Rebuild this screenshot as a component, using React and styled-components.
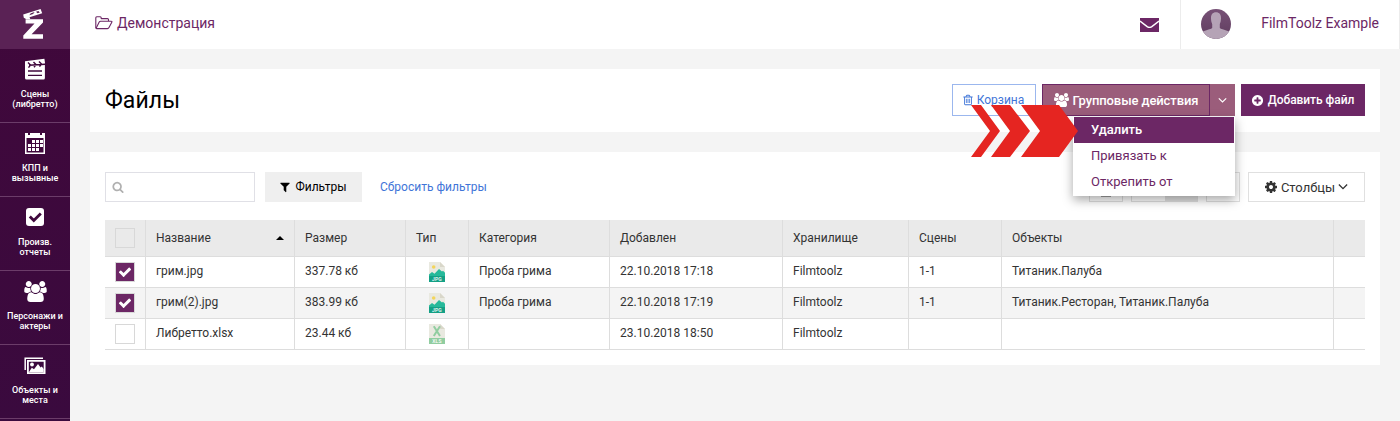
import React from "react";
import styled, { createGlobalStyle } from "styled-components";

const GlobalStyle = createGlobalStyle`
  * {
    box-sizing: border-box;
  }
  body {
    margin: 0;
    background: #f4f4f4;
    font-family: Roboto, "Liberation Sans", sans-serif;
    font-size: 13px;
    color: #333;
  }
  button {
    font-family: inherit;
    margin: 0;
  }
  svg {
    display: block;
    flex: none;
  }
`;

const paths = {
  users:
    "M593 896q-162 5-265 128h-134q-82 0-138-40.5t-56-118.5q0-353 124-353 6 0 43.5 21t97.5 42.5 119 21.5q67 0 133-23-5 37-5 66 0 139 81 256zm1071 637q0 120-73 189.5t-194 69.5h-874q-121 0-194-69.5t-73-189.5q0-53 3.5-103.5t14-109 26.5-108.5 43-97.5 62-81 85.5-53.5 111.5-20q10 0 43 21.5t73 48 107 48 135 21.5 135-21.5 107-48 73-48 43-21.5q61 0 111.5 20t85.5 53.5 62 81 43 97.5 26.5 108.5 14 109 3.5 103.5zm-1024-1277q0 106-75 181t-181 75-181-75-75-181 75-181 181-75 181 75 75 181zm704 384q0 159-112.5 271.5t-271.5 112.5-271.5-112.5-112.5-271.5 112.5-271.5 271.5-112.5 271.5 112.5 112.5 271.5zm576 225q0 78-56 118.5t-138 40.5h-134q-103-123-265-128 81-117 81-256 0-29-5-66 66 23 133 23 59 0 119-21.5t97.5-42.5 43.5-21q124 0 124 353zm-128-609q0 106-75 181t-181 75-181-75-75-181 75-181 181-75 181 75 75 181z",
  trash:
    "M704 736v576q0 14-9 23t-23 9h-64q-14 0-23-9t-9-23v-576q0-14 9-23t23-9h64q14 0 23 9t9 23zm256 0v576q0 14-9 23t-23 9h-64q-14 0-23-9t-9-23v-576q0-14 9-23t23-9h64q14 0 23 9t9 23zm256 0v576q0 14-9 23t-23 9h-64q-14 0-23-9t-9-23v-576q0-14 9-23t23-9h64q14 0 23 9t9 23zm128 724v-948h-896v948q0 22 7 40.5t14.5 27 10.5 8.5h832q3 0 10.5-8.5t14.5-27 7-40.5zm-672-1076h448l-48-117q-7-9-17-11h-317q-10 2-17 11zm928 32v64q0 14-9 23t-23 9h-96v948q0 83-47 143.5t-113 60.5h-832q-66 0-113-58.5t-47-141.5v-952h-96q-14 0-23-9t-9-23v-64q0-14 9-23t23-9h309l70-167q15-37 54-63t79-26h320q40 0 79 26t54 63l70 167h309q14 0 23 9t9 23z",
  search:
    "M1216 832q0-185-131.5-316.5t-316.5-131.5-316.5 131.5-131.5 316.5 131.5 316.5 316.5 131.5 316.5-131.5 131.5-316.5zm512 832q0 52-38 90t-90 38q-54 0-90-38l-343-342q-179 124-399 124-143 0-273.5-55.5t-225-150-150-225-55.5-273.5 55.5-273.5 150-225 225-150 273.5-55.5 273.5 55.5 225 150 150 225 55.5 273.5q0 220-124 399l343 343q37 37 37 90z",
  cog: "M1152 896q0-106-75-181t-181-75-181 75-75 181 75 181 181 75 181-75 75-181zm512-109v222q0 12-8 23t-20 13l-185 28q-19 54-39 91 35 50 107 138 10 12 10 25t-9 23q-27 37-99 108t-94 71q-12 0-26-9l-138-108q-44 23-91 38-16 136-29 186-7 28-36 28h-222q-14 0-24.5-8.5t-11.5-21.5l-28-184q-49-16-90-37l-141 107q-10 9-25 9-14 0-25-11-126-114-165-168-7-10-7-23 0-12 8-23 15-21 51-66.5t54-70.5q-27-50-41-99l-183-27q-13-2-21-12.5t-8-23.5v-222q0-12 8-23t19-13l186-28q14-46 39-92-40-57-107-138-10-12-10-24 0-10 9-23 26-36 98.5-107.5t94.5-71.5q13 0 26 10l138 107q44-23 91-38 16-136 29-186 7-28 36-28h222q14 0 24.5 8.5t11.5 21.5l28 184q49 16 90 37l142-107q9-9 24-9 13 0 25 10 129 119 165 170 7 8 7 22 0 12-8 23-15 21-51 66.5t-54 70.5q26 50 41 98l183 28q13 2 21 12.5t8 23.5z",
  filter:
    "M1595 295q17 41-14 70l-493 493v742q0 42-39 59-13 5-25 5-27 0-45-19l-256-256q-19-19-19-45v-486l-493-493q-31-29-14-70 17-39 59-39h1280q42 0 59 39z",
  plus: "M1344 960v-128q0-26-19-45t-45-19h-256v-256q0-26-19-45t-45-19h-128q-26 0-45 19t-19 45v256h-256q-26 0-45 19t-19 45v128q0 26 19 45t45 19h256v256q0 26 19 45t45 19h128q26 0 45-19t19-45v-256h256q26 0 45-19t19-45zm320-64q0 209-103 385.5t-279.5 279.5-385.5 103-385.5-103-279.5-279.5-103-385.5 103-385.5 279.5-279.5 385.5-103 385.5 103 279.5 279.5 103 385.5z",
  check:
    "M1671 566q0 40-28 68l-724 724-136 136q-28 28-68 28t-68-28l-136-136-362-362q-28-28-28-68t28-68l136-136q28-28 68-28t68 28l294 295 656-657q28-28 68-28t68 28l136 136q28 28 28 68z",
};

const Icon = ({ name, size = 13, width }) => (
  <svg
    width={width || size}
    height={size}
    viewBox={name === "users" ? "0 0 1920 1792" : "0 0 1792 1792"}
    fill="currentColor"
  >
    <path d={paths[name]} />
  </svg>
);

const Chevron = ({ size = 9 }) => (
  <svg width={size} height={size} viewBox="0 0 9 9" fill="none">
    <path d="M.8 2.300 4.500 6 8.200 2.300" stroke="currentColor" strokeWidth="1.200" />
  </svg>
);

const LogoIcon = () => (
  <svg width="22" height="32" viewBox="0 0 22 32" fill="#fff">
    <path
      fillRule="evenodd"
      d="M1.200 6.600 18.600 1l1.600 4.300L7.500 9.300l.8 1.700H4L1.800 9.800zM7.300 7.300l3.800-1.200 1.500-2L8.800 5.300zM14 3.700l1.500 1.600 2.300-.8-1.400-1.600z"
    />
    <path d="M3.600 11.300H21v3.300L9.600 26.300H21v4.500H1.300v-3.400l11.200-11.800H3.600z" />
  </svg>
);

const ClapperIcon = () => (
  <svg width="22" height="22" viewBox="0 0 22 22">
    <path
      fill="#fff"
      d="M1 3.200 20.400.8l.5 3.400V20a1.500 1.500 0 0 1-1.500 1.500H2.500A1.500 1.500 0 0 1 1 20z"
    />
    <path
      d="M4 4.500 6.500 7 4.500 9.700M9.500 4 12 6.600 10 9.200M15 3.400l2.500 2.600-2 2.600M5 7.300l16-1.100"
      fill="none"
      stroke="#40083c"
      strokeWidth="1.400"
    />
    <path d="M4 13h14M4 17.300h14" stroke="#40083c" strokeWidth="1.300" />
  </svg>
);

const CalendarIcon = () => (
  <svg width="20" height="22" viewBox="0 0 20 22">
    <path fill="#fff" d="M0 1h3v2h2V1h10v2h2V1h3v21H0z" />
    <path fill="#40083c" d="M1.500 6h17v14.500h-17z" />
    <path
      fill="#fff"
      d="M7 8h3v3H7zM11 8h3v3h-3zM15 8h3v3h-3zM3 12h3v3H3zM7 12h3v3H7zM11 12h3v3h-3zM15 12h3v3h-3zM3 16h3v3H3zM7 16h3v3H7zM11 16h3v3h-3z"
    />
  </svg>
);

const ReportIcon = () => (
  <svg width="18" height="18" viewBox="0 0 18 18">
    <rect width="18" height="18" rx="3" fill="#fff" />
    <path d="m3.800 8.500 4 4 7-7" fill="none" stroke="#3f083d" strokeWidth="2.800" />
  </svg>
);

const PhotosIcon = () => (
  <svg width="22" height="17" viewBox="0 0 22 17">
    <path d="M1.200 13V1.200H19" fill="none" stroke="#fff" strokeWidth="1.500" />
    <path fill="#fff" fillRule="evenodd" d="M3 3h18.500v14H3zm1.800 1.800v10.400h14.900V4.800z" />
    <circle cx="8" cy="7.500" r="1.900" fill="#fff" />
    <path fill="#fff" d="m5 15 2.800-4.200 2.200 1.500L14 7l2.600 3.500 1.200-1 1.900 2.500v3z" />
  </svg>
);

const FolderIcon = () => (
  <svg width="18" height="14" viewBox="0 0 18 14" fill="none" stroke="#6c2765" strokeLinejoin="round">
    <path d="M.8 12V1.800Q.8.8 1.800.8h3.400q1 0 1 1v.8h6.300q1 0 1 1V5" strokeWidth="1.100" />
    <path d="M1 12.600 4.200 6q.4-.8 1.400-.8h10.600q1.200 0 .6 1L14 11.600q-.5 1-1.600 1H1.600q-.8 0-.8-.8" strokeWidth="1.100" />
  </svg>
);

const MailIcon = () => (
  <svg width="19" height="14" viewBox="0 0 19 14">
    <path fill="#6c2765" d="M0 0h19v14H0z" />
    <path d="m0 3 7.500 5.800q2 1.200 4 0L19 3" fill="none" stroke="#fff" strokeWidth="1.400" />
  </svg>
);

const Avatar = () => (
  <svg width="30" height="30" viewBox="0 0 30 30">
    <defs>
      <linearGradient id="avatar-bg" x1="0" y1="0" x2="0" y2="1">
        <stop offset="0" stopColor="#775176" />
        <stop offset="1" stopColor="#5f3c5e" />
      </linearGradient>
      <clipPath id="avatar-clip">
        <circle cx="15" cy="15" r="15" />
      </clipPath>
    </defs>
    <g clipPath="url(#avatar-clip)">
      <path fill="url(#avatar-bg)" d="M0 0h30v30H0z" />
      <path
        fill="#b5a3b6"
        d="M15 3.200c3.400 0 5.100 2.400 5 5.800 0 2.500-.5 4.500-1.200 6v4c1.500 1.500 6.500 1.800 10.200 4V30H1v-7c3.700-2.200 8.700-2.500 10.200-4v-4c-.7-1.500-1.200-3.500-1.200-6-.1-3.400 1.600-5.800 5-5.800z"
      />
    </g>
  </svg>
);

const FileLabel = styled.text`
  font-size: 5px;
  font-weight: 500;
  letter-spacing: 0.2px;
  fill: #fff;
  text-anchor: middle;
`;

const JpgIcon = () => (
  <svg width="16" height="20" viewBox="0 0 16 20">
    <path fill="#e9e9e0" d="M0 0h11l5 5v15H0z" />
    <path fill="#d9d7ca" d="M11 0v5h5z" />
    <circle cx="4.700" cy="5" r="1.800" fill="#f3d55b" />
    <path fill="#26b99a" d="m0 12.500 3-2.500 2.500 1.700L10 7l3 2.500 1-.7 2 2V14H0z" />
    <path fill="#14a085" d="M0 14h16v6H0z" />
    <FileLabel x="8" y="18.800">
      JPG
    </FileLabel>
  </svg>
);

const XlsIcon = () => (
  <svg width="16" height="20" viewBox="0 0 16 20">
    <path fill="#e9e9e0" d="M0 0h11l5 5v15H0z" />
    <path fill="#d9d7ca" d="M11 0v5h5z" />
    <path d="m4.800 2.200 6.200 9.800M11 2.200 4.800 12" stroke="#91cda0" strokeWidth="2" />
    <path fill="#91cda0" d="M0 14h16v6H0z" />
    <FileLabel x="8" y="18.800">
      XLS
    </FileLabel>
  </svg>
);

const Layout = styled.div`
  display: flex;
  height: 421px;
  overflow: hidden;
`;

const Sidebar = styled.nav`
  flex: none;
  width: 70px;
  background: linear-gradient(#40083b, #3a0a3e);
  color: #fff;
`;

const Logo = styled.div`
  height: 49px;
  display: flex;
  justify-content: center;
  padding: 8px 4px 0 0;
  background: #5a2255;
`;

const NavItem = styled.a`
  display: flex;
  flex-direction: column;
  align-items: center;
  height: 74px;
  border-bottom: 1px solid #6b3c69;
  font-size: 9px;
  font-weight: 500;
  line-height: 10px;
  text-align: center;
  white-space: pre-line;
  .nav-icon {
    height: 40px;
    display: flex;
    align-items: center;
  }
`;

const Main = styled.main`
  flex: 1;
  min-width: 0;
`;

const Header = styled.header`
  display: flex;
  height: 49px;
  background: #fff;
  border-right: 1px solid #ececec;
  color: #6c2765;
  font-size: 14px;
`;

const Project = styled.div`
  flex: 1;
  display: flex;
  align-items: center;
  gap: 4px;
  padding: 0 0 3px 25px;
`;

const MailBox = styled.div`
  width: 41px;
  border-right: 1px solid #ececec;
  padding-top: 18px;
`;

const Profile = styled.div`
  width: 218px;
  display: flex;
  align-items: center;
  justify-content: space-between;
  padding: 0 20px 2px 20px;
  span {
    padding-bottom: 1px;
  }
`;

const Panel = styled.section`
  margin: 20px 20px 0;
  padding: ${(props) => props.$pad};
  background: #fff;
`;

const TitleRow = styled.div`
  display: flex;
  gap: 6px;
  height: 32px;
`;

const Title = styled.h1`
  flex: 1;
  margin: 0;
  font-size: 23px;
  font-weight: 400;
  line-height: 33px;
  letter-spacing: 0.1px;
  color: #000;
`;

const Button = styled.button`
  display: flex;
  align-items: center;
  justify-content: center;
  gap: ${(props) => props.$gap || 4}px;
  width: ${(props) => props.$width}px;
  height: 100%;
  padding: ${(props) => props.$pad || 0};
  border: 1px solid ${(props) => props.$line || props.$bg};
  background: ${(props) => props.$bg || "#fff"};
  color: ${(props) => props.$color || "#fff"};
  font-size: ${(props) => props.$size || 13}px;
  font-weight: ${(props) => props.$weight || 400};
  letter-spacing: ${(props) => props.$spacing || 0}px;
`;

const ButtonGroup = styled.div`
  position: relative;
  display: flex;
`;

const Menu = styled.ul`
  position: absolute;
  z-index: 2;
  top: 33px;
  right: 0;
  width: 162px;
  margin: 0;
  padding: 0 1px 1px;
  list-style: none;
  background: #fff;
  box-shadow: 0 4px 10px rgba(0, 0, 0, 0.35);
`;

const MenuItem = styled.li`
  height: 26px;
  padding-left: 17px;
  line-height: 25px;
  color: ${(props) => (props.$active ? "#fff" : "#6c2765")};
  font-weight: ${(props) => (props.$active ? 500 : 400)};
  background: ${(props) => (props.$active ? "#6c2765" : "#fff")};
`;

/* red pointer laid over the button and the menu */
const Pointer = styled.svg`
  position: absolute;
  z-index: 3;
  left: -71px;
  top: 21px;
`;

const Toolbar = styled.div`
  display: flex;
  height: 30px;
  margin-bottom: 18px;
`;

const Search = styled.div`
  width: 150px;
  display: flex;
  align-items: center;
  padding: 0 0 1px 6px;
  margin-right: 10px;
  border: 1px solid #e0e0e6;
  color: #b0b0b0;
`;

const ResetLink = styled.a`
  flex: 1;
  padding-left: 18px;
  font-size: 12px;
  line-height: 30px;
  color: #3f75d8;
`;

const ViewButtons = styled.div`
  display: flex;
  gap: 8px;
`;

const ViewButton = styled.div`
  display: flex;
  width: ${(props) => props.$width || 34}px;
  border: 1px solid #e0e0e0;
  align-items: center;
  justify-content: center;
  .active {
    margin-left: auto;
    width: 32px;
    height: 100%;
    background: #e2e2e2;
  }
`;

const Table = styled.table`
  width: 1260px;
  table-layout: fixed;
  border-collapse: separate;
  border-spacing: 0;
  font-size: 12px;
  color: #333;
`;

const Cell = styled.td`
  height: ${(props) => (props.$head ? 37 : 31)}px;
  padding: ${(props) => (props.$head ? "0 10px 0" : "0 10px 2px")};
  border-right: 1px solid #ddd;
  border-bottom: 1px solid #ddd;
  white-space: nowrap;
  &:last-child {
    border-right: none;
  }
`;

const IconCell = styled(Cell)`
  padding: 0;
  svg {
    margin: 0 auto;
  }
`;

const Row = styled.tr`
  background: ${(props) => props.$bg || "#fff"};
`;

const Checkbox = styled.div`
  width: 20px;
  height: 20px;
  margin: 0 auto;
  display: flex;
  align-items: center;
  justify-content: center;
  border: 1px solid #d8d8d8;
  color: #fff;
  background: ${(props) => (props.$checked ? "#6c2765" : "transparent")};
`;

const SortHead = styled.div`
  display: flex;
  align-items: center;
  justify-content: space-between;
  &::after {
    content: "";
    border: 4px solid transparent;
    border-top: none;
    border-bottom-color: #000;
  }
`;

const nav = [
  { icon: <ClapperIcon />, label: "Сцены\n(либретто)" },
  { icon: <CalendarIcon />, label: "КПП и\nвызывные" },
  { icon: <ReportIcon />, label: "Произв.\nотчеты" },
  { icon: <Icon name="users" width={23} size={21} />, label: "Персонажи и\nактеры" },
  { icon: <PhotosIcon />, label: "Объекты и\nместа" },
  { icon: null, label: "" },
];

const widths = [41, 149, 111, 63, 141, 173, 126, 93, 332, 31];

const heads = ["Размер", "Тип", "Категория", "Добавлен", "Хранилище", "Сцены", "Объекты", ""];

const files = [
  {
    name: "грим.jpg",
    size: "337.78 кб",
    category: "Проба грима",
    date: "22.10.2018 17:18",
    scenes: "1-1",
    objects: "Титаник.Палуба",
    checked: true,
  },
  {
    name: "грим(2).jpg",
    size: "383.99 кб",
    category: "Проба грима",
    date: "22.10.2018 17:19",
    scenes: "1-1",
    objects: "Титаник.Ресторан, Титаник.Палуба",
    checked: true,
  },
  { name: "Либретто.xlsx", size: "23.44 кб", date: "23.10.2018 18:50", xls: true },
];

const FilesTable = () => (
  <Table>
    <colgroup>
      {widths.map((w, i) => (
        <col key={i} width={w} />
      ))}
    </colgroup>
    <tbody>
      <Row $bg="#eaeaea">
        <IconCell $head>
          <Checkbox />
        </IconCell>
        <Cell $head>
          <SortHead>Название</SortHead>
        </Cell>
        {heads.map((head) => (
          <Cell $head key={head}>
            {head}
          </Cell>
        ))}
      </Row>
      {files.map((file, i) => (
        <Row key={file.name} $bg={i % 2 ? "#f4f4f4" : "#fff"}>
          <IconCell>
            <Checkbox $checked={file.checked}>
              {file.checked && <Icon name="check" size={14} />}
            </Checkbox>
          </IconCell>
          <Cell>{file.name}</Cell>
          <Cell>{file.size}</Cell>
          <IconCell>{file.xls ? <XlsIcon /> : <JpgIcon />}</IconCell>
          <Cell>{file.category}</Cell>
          <Cell>{file.date}</Cell>
          <Cell>Filmtoolz</Cell>
          <Cell>{file.scenes}</Cell>
          <Cell>{file.objects}</Cell>
          <Cell />
        </Row>
      ))}
    </tbody>
  </Table>
);

const App = () => {
  return (
    <Layout>
      <GlobalStyle />
      <Sidebar>
        <Logo>
          <LogoIcon />
        </Logo>
        {nav.map((item) => (
          <NavItem key={item.label}>
            <span className="nav-icon">{item.icon}</span>
            {item.label}
          </NavItem>
        ))}
      </Sidebar>
      <Main>
        <Header>
          <Project>
            <FolderIcon />
            Демонстрация
          </Project>
          <MailBox>
            <MailIcon />
          </MailBox>
          <Profile>
            <Avatar />
            <span>FilmToolz Example</span>
          </Profile>
        </Header>

        <Panel $pad="15px 15px 16px">
          <TitleRow>
            <Title>Файлы</Title>
            <Button $width={84} $line="#9bb7ee" $color="#3f75d8" $size={12} $gap={3} $pad="0 2px 0 0">
              <Icon name="trash" size={12} />
              Корзина
            </Button>
            <ButtonGroup>
              <Button $width={168} $bg="#9b5d7b" $line="#6c2765" $weight={500} $spacing={-0.1}>
                <Icon name="users" size={14} width={15} />
                Групповые действия
              </Button>
              <Button $width={25} $bg="#9b5d7b">
                <Chevron />
              </Button>
              <Menu>
                <MenuItem $active>Удалить</MenuItem>
                <MenuItem>Привязать к</MenuItem>
                <MenuItem>Открепить от</MenuItem>
              </Menu>
              <Pointer width="108" height="52" viewBox="0 0 108 52" fill="#e52521">
                <path d="M0 0h10l19 26-19 26H0l19-26zM20 0h19l20 26-20 26H20l19-26zM50 0h38l19 26-19 26H50l19-26z" />
              </Pointer>
            </ButtonGroup>
            <Button $width={124} $bg="#6c2765" $size={12} $weight={500} $spacing={-0.05} $pad="0 1px 0 0">
              <Icon name="plus" size={13} />
              Добавить файл
            </Button>
          </TitleRow>
        </Panel>

        <Panel $pad="20px 15px 15px">
          <Toolbar>
            <Search>
              <Icon name="search" size={12} />
            </Search>
            <Button $width={97} $bg="#efefef" $color="#000" $size={12} $pad="0 1px 0 0">
              <Icon name="filter" size={12} />
              Фильтры
            </Button>
            <ResetLink>Сбросить фильтры</ResetLink>
            <ViewButtons>
              <ViewButton>
                <svg width="12" height="20" viewBox="0 0 12 20">
                  <path d="M1 5h10v14.500H1z" fill="#444" />
                </svg>
              </ViewButton>
              <ViewButton $width={67}>
                <span className="active" />
              </ViewButton>
              <ViewButton>
                <svg width="16" height="20" viewBox="0 0 16 20" fill="none" stroke="#333">
                  <path d="M1 7V3h4M11 3h4v4M1 13v4h4M9 11l6.500 8" />
                </svg>
              </ViewButton>
              <Button $width={117} $line="#e0e0e0" $color="#333" $gap={3} $pad="0 1px 0 0">
                <Icon name="cog" size={14} />
                Столбцы
                <Chevron size={10} />
              </Button>
            </ViewButtons>
          </Toolbar>
          <FilesTable />
        </Panel>
      </Main>
    </Layout>
  );
};

export default App;
